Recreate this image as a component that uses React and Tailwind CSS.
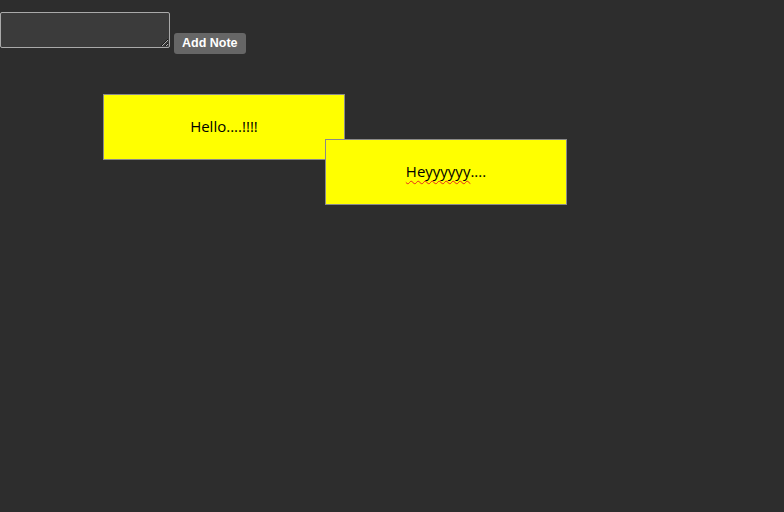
import React from 'react'

const notes = [
  { id: 1, text: 'Hello....!!!!', left: 103, top: 94 },
  { id: 2, text: 'Heyyyyyy....', left: 325, top: 139, typo: true },
]

function Note({ note }) {
  return (
    <div
      className="absolute w-[242px] h-[66px] bg-[#ffff00] border border-[#8a8a8a] flex items-center justify-center pb-[2px] text-[15px] text-black font-['Open_Sans',sans-serif]"
      style={{ left: note.left, top: note.top }}
    >
      {note.typo ? (
        <span>
          <span className="underline decoration-wavy decoration-[#e8261c] decoration-[1px] underline-offset-[3px] [text-decoration-skip-ink:none]">Heyyyyyy</span>
          ....
        </span>
      ) : (
        <span>{note.text}</span>
      )}
    </div>
  )
}

export default function App() {
  return (
    <div className="relative w-[784px] h-[512px] bg-[#2d2d2d] overflow-hidden">
      {/* input row */}
      <div className="flex items-end gap-1 pt-3">
        <textarea className="w-[170px] h-[36px] bg-[#3b3b3b] border border-[#a9a9a9] rounded-[2px] resize-y outline-none" />
        <button className="mb-[-6px] h-[21px] px-[8px] rounded-[3px] bg-[#666666] text-white text-[12.5px] font-semibold font-['Liberation_Sans',Arial,sans-serif]">
          Add Note
        </button>
      </div>

      {/* notes canvas */}
      {notes.map((note) => (
        <Note key={note.id} note={note} />
      ))}
    </div>
  )
}
